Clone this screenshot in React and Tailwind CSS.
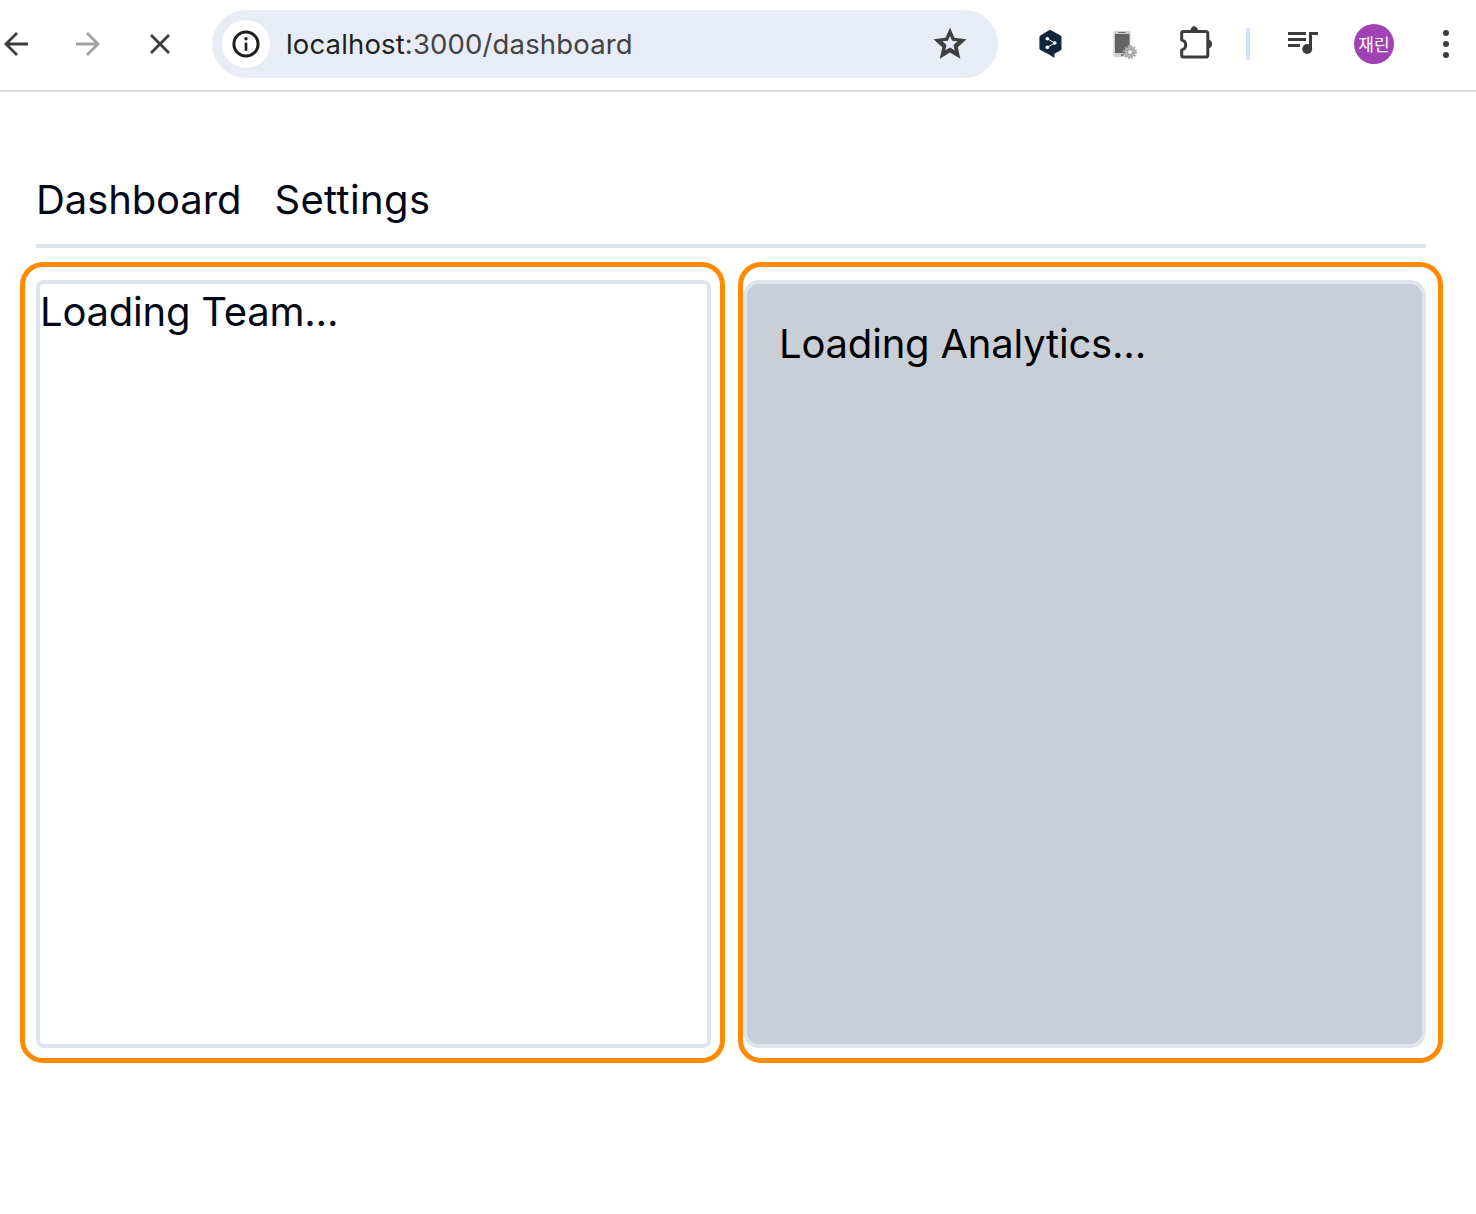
const BackIcon = () => (
  <svg className="size-8 shrink-0" viewBox="0 0 32 32" fill="none" stroke="#3c3c3c" strokeWidth="2.8">
    <path d="M28 16H6M17 5L6 16l11 11" />
  </svg>
);

const ForwardIcon = () => (
  <svg className="ml-10 size-8 shrink-0" viewBox="0 0 32 32" fill="none" stroke="#a1a1a1" strokeWidth="2.8">
    <path d="M4 16h22M15 5l11 11-11 11" />
  </svg>
);

const StopIcon = () => (
  <svg className="ml-10 size-8 shrink-0" viewBox="0 0 32 32" fill="none" stroke="#3c3c3c" strokeWidth="2.8">
    <path d="M7 7l18 18M25 7L7 25" />
  </svg>
);

const InfoIcon = () => (
  <svg className="size-8" viewBox="0 0 32 32" fill="none">
    <circle cx="16" cy="16" r="12.1" stroke="#1f1f1f" strokeWidth="3" />
    <path d="M16 14.6v8.2" stroke="#1f1f1f" strokeWidth="2.7" />
    <circle cx="16" cy="10.8" r="1.7" fill="#1f1f1f" />
  </svg>
);

const StarIcon = () => (
  <svg className="mr-7 size-10 shrink-0" viewBox="0 0 40 40">
    <path
      fill="#3f3f3f"
      fillRule="evenodd"
      d="M20 3.5l4.4 10.3L36.5 15.3l-8.7 8 2.6 11.4L20 28.6 9.8 34.7l2.5-11.4-8.8-8 12.1-1.5zM20 12l-2.1 4.7-5.4.6 4 3.7-1.1 5.2 4.6-2.7 4.7 2.7-1.2-5.2 4-3.7-5.4-.6z"
    />
  </svg>
);

const TranslateIcon = () => (
  <svg className="ml-9 size-8 shrink-0" viewBox="0 0 32 32">
    <path
      fill="#10263f"
      d="M15 2.300a2 2 0 0 1 2 0l9.500 5.300a1.800 1.800 0 0 1 1 1.600v11.600a1.800 1.800 0 0 1-1 1.600L20.400 25.800V30l-5-3.200-9-4.700a1.800 1.800 0 0 1-1-1.600V9.200a1.800 1.800 0 0 1 1-1.600z"
    />
    <path d="M13.300 10.700l7.500 4.300-7.700 4.400" fill="none" stroke="#fff" strokeWidth="1" />
    <circle cx="13.300" cy="10.700" r="1.800" fill="#fff" />
    <circle cx="20.800" cy="15" r="1.800" fill="#fff" />
    <circle cx="13.300" cy="19.400" r="1.800" fill="#fff" />
  </svg>
);

const PhoneGearIcon = () => (
  <svg className="ml-10 size-8 shrink-0" viewBox="0 0 32 32">
    <rect x="7.500" y="3" width="17" height="26" rx="1" fill="#cfcfcf" />
    <rect x="9" y="6" width="14.500" height="19" fill="#646464" />
    <path d="M12.500 4.500h7" stroke="#666" strokeWidth="1" />
    <path d="M15 27h3" stroke="#555" strokeWidth="1.300" />
    <circle cx="24" cy="24" r="6" fill="none" stroke="#aaa" strokeWidth="2.200" strokeDasharray="1.600 1.540" />
    <circle cx="24" cy="24" r="5.200" fill="#b8b8b8" stroke="#919191" strokeWidth=".6" />
    <circle cx="24" cy="24" r="3" fill="#cecece" stroke="#888" strokeWidth=".7" />
    <circle cx="24" cy="24" r="1.500" fill="#f2f2f2" />
  </svg>
);

const PuzzleIcon = () => (
  <svg className="ml-[38px] size-10 shrink-0" viewBox="0 0 40 40">
    <path
      d="M7.500 7.500h22.500a1.800 1.800 0 0 1 1.800 1.800v22a1.800 1.800 0 0 1-1.800 1.800H7.500a1.800 1.800 0 0 1-1.800-1.800v-5.400a5 5 0 0 0 0-9.800V9.300a1.800 1.800 0 0 1 1.800-1.800z"
      fill="none"
      stroke="#3c3c3c"
      strokeWidth="3"
      strokeLinejoin="round"
    />
    <path d="M14.300 7a3.900 4.700 0 0 1 7.800 0zM32 15.800a4 4.200 0 0 1 0 8.400z" fill="#3c3c3c" />
  </svg>
);

const QueueMusicIcon = () => (
  <svg className="ml-[34px] size-9 shrink-0" viewBox="0 0 36 36" fill="#3c3c3c">
    <path d="M4 6h18v3H4zM4 12h18v3H4zM4 18h12v3H4zM25 6h9v3h-6v14h-3z" />
    <circle cx="23.200" cy="23" r="5" />
  </svg>
);

const MenuIcon = () => (
  <svg className="ml-9 size-8 shrink-0" viewBox="0 0 32 32" fill="#3c3c3c">
    <circle cx="16" cy="5" r="3" />
    <circle cx="16" cy="16" r="3" />
    <circle cx="16" cy="27" r="3" />
  </svg>
);

function Toolbar() {
  return (
    <header className="flex h-[92px] items-center border-b-2 border-[#dedede] bg-white pb-0.5">
      <BackIcon />
      <ForwardIcon />
      <StopIcon />
      <div className="ml-9 flex h-[68px] w-[786px] shrink-0 items-center rounded-full bg-[#e8ecf6] pl-2.5">
        <div className="flex size-12 shrink-0 items-center justify-center rounded-full bg-white">
          <InfoIcon />
        </div>
        <div className="ml-4 flex-1 whitespace-nowrap text-[27.5px] leading-10 tracking-[0.15px] text-[#434343]">
          <span className="text-[#1f1f1f]">localhost</span>:3000/dashboard
        </div>
        <StarIcon />
      </div>
      <TranslateIcon />
      <PhoneGearIcon />
      <PuzzleIcon />
      <div className="ml-[30px] h-8 w-1 shrink-0 rounded-full bg-[#d0dffb]" />
      <QueueMusicIcon />
      <div className="ml-[34px] flex size-10 shrink-0 items-center justify-center rounded-full bg-[#a142b4] pb-0.5 font-['Noto_Sans_CJK_KR',sans-serif] text-[17px] leading-none text-white">
        재린
      </div>
      <MenuIcon />
    </header>
  );
}

export default function App() {
  return (
    <div className="h-[1214px] w-[1476px] overflow-hidden bg-white font-['Inter',sans-serif]">
      <Toolbar />
      <main className="pt-20 text-[40px] leading-[56px] text-[#020817]">
        <nav className="ml-9 flex h-[76px] w-[1390px] gap-[33px] border-b-4 border-[#dfe5ef]">
          <a className="tracking-[-0.1px]">Dashboard</a>
          <a className="tracking-[0.35px]">Settings</a>
        </nav>
        <div className="ml-5 mt-3.5 flex gap-[13px]">
          <section className="h-[801px] w-[705px] rounded-[23px] border-5 border-[#ff8900] pb-2.5 pl-[11px] pr-[9px] pt-[13px]">
            <div className="h-full rounded-lg border-4 border-[#dfe5ef] tracking-[-0.22px]">Loading Team...</div>
          </section>
          <section className="h-[801px] w-[705px] rounded-[23px] border-5 border-[#ff8900] pb-2.5 pr-3 pt-[13px]">
            <div className="h-full rounded-2xl border-4 border-[#dfe5ef] bg-[#cacfd7] p-8 tracking-[-0.2px] text-black">
              Loading Analytics...
            </div>
          </section>
        </div>
      </main>
    </div>
  );
}
